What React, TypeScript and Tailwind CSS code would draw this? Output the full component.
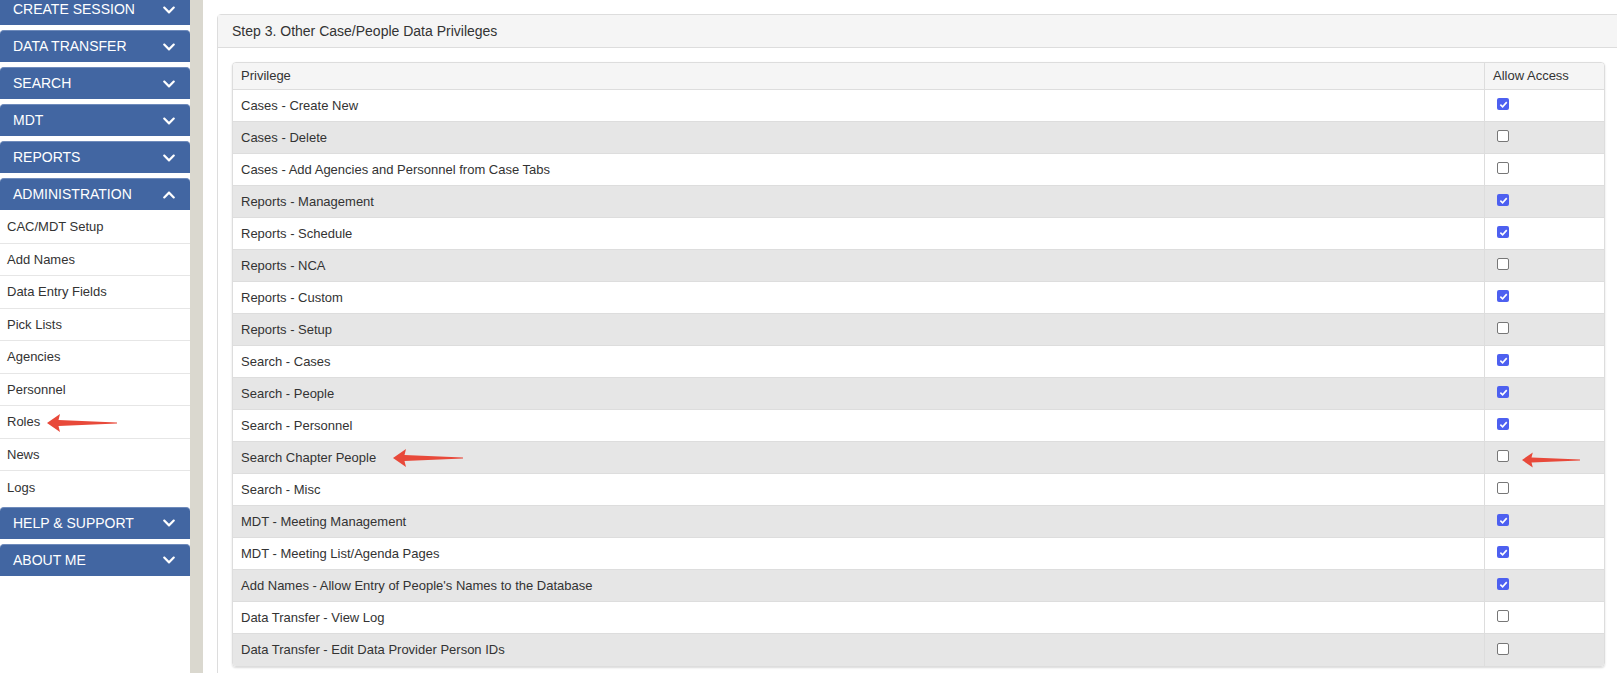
import React from 'react';
import { FaChevronDown, FaChevronUp } from 'react-icons/fa';

const menus = ['CREATE SESSION', 'DATA TRANSFER', 'SEARCH', 'MDT', 'REPORTS'];
const adminLinks = [
  'CAC/MDT Setup',
  'Add Names',
  'Data Entry Fields',
  'Pick Lists',
  'Agencies',
  'Personnel',
  'Roles',
  'News',
  'Logs',
];

const privileges: [string, boolean][] = [
  ['Cases - Create New', true],
  ['Cases - Delete', false],
  ['Cases - Add Agencies and Personnel from Case Tabs', false],
  ['Reports - Management', true],
  ['Reports - Schedule', true],
  ['Reports - NCA', false],
  ['Reports - Custom', true],
  ['Reports - Setup', false],
  ['Search - Cases', true],
  ['Search - People', true],
  ['Search - Personnel', true],
  ['Search Chapter People', false],
  ['Search - Misc', false],
  ['MDT - Meeting Management', true],
  ['MDT - Meeting List/Agenda Pages', true],
  ["Add Names - Allow Entry of People's Names to the Database", true],
  ['Data Transfer - View Log', false],
  ['Data Transfer - Edit Data Provider Person IDs', false],
];

function MenuBar({ label, open = false }: { label: string; open?: boolean }) {
  return (
    <div className="flex items-center justify-between h-[32px] mb-[5px] pl-[13px] pr-[14px] bg-[#4266a2] border-t border-[#6f8bbb] rounded-t-[4px] text-white text-[14px]">
      <span>{ label }</span>
      { open ? <FaChevronUp size={ 14 } /> : <FaChevronDown size={ 14 } /> }
    </div>
  );
}

function RedArrow({ className }: { className: string }) {
  return (
    <svg className={ `absolute pointer-events-none ${className}` } width="70" height="20" viewBox="0 0 70 20">
      <path d="M0 10 L13 1 L11.5 7 L70 9.4 L70 10.6 L11.5 13 L13 19 Z" fill="#e8493a" />
    </svg>
  );
}

function CheckBox({ checked }: { checked: boolean }) {
  return checked ? (
    <span className="flex items-center justify-center w-[12px] h-[12px] rounded-[2px] bg-[#4d60f0]">
      <svg width="9" height="9" viewBox="0 0 10 10">
        <path d="M1.5 5.2 L4 7.6 L8.6 2.4" stroke="white" strokeWidth="1.8" fill="none" />
      </svg>
    </span>
  ) : (
    <span className="block w-[12px] h-[12px] rounded-[2px] border border-[#777] bg-white" />
  );
}

export default function App() {
  return (
    <div className="relative flex h-[673px] overflow-hidden bg-white text-[#333] font-['Liberation_Sans',Arial,sans-serif]">
      <aside className="w-[190px] shrink-0 mt-[-7px]">
        { menus.map((m) => <MenuBar key={ m } label={ m } />) }
        <MenuBar label="ADMINISTRATION" open />
        <div className="mt-[-4px] mb-[3px]">
          { adminLinks.map((l, i) => (
            <div
              key={ l }
              className={ `h-[32.5px] flex items-center pl-[7px] text-[13px] ${i < adminLinks.length - 1 ? 'border-b border-[#e6e6e6]' : ''}` }
            >
              { l }
            </div>
          )) }
        </div>
        <MenuBar label="HELP & SUPPORT" />
        <MenuBar label="ABOUT ME" />
      </aside>
      <div className="w-[13px] shrink-0 bg-[#dad8cf]" />
      <main className="flex-1 pl-[14px] pt-[14px] min-w-0">
        <section className="mr-[-3px] border border-[#ddd] rounded-tl-[4px] h-[700px]">
          <div className="h-[33px] flex items-center px-[14px] bg-[#f5f5f5] border-b border-[#ddd] text-[14px]">
            Step 3. Other Case/People Data Privileges
          </div>
          <div className="p-[14px]">
            <div className="border border-[#ddd] rounded-[4px] overflow-hidden shadow-[0_1px_2px_rgba(0,0,0,0.15)]">
              <div className="flex h-[27px] bg-[#f5f5f5] border-b border-[#ddd] text-[13px]">
                <div className="flex-1 flex items-center px-[8px]">Privilege</div>
                <div className="w-[120px] flex items-center px-[8px] border-l border-[#ddd]">Allow Access</div>
              </div>
              { privileges.map(([name, ok], i) => (
                <div
                  key={ name }
                  className={ `flex h-[32px] text-[13px] ${i % 2 ? 'bg-[#e6e6e6]' : 'bg-white'} ${i < privileges.length - 1 ? 'border-b border-[#ddd]' : ''}` }
                >
                  <div className="flex-1 flex items-center px-[8px]">{ name }</div>
                  <div className="w-[120px] flex items-center pl-[12px] pb-[3px] border-l border-[#ddd]">
                    <CheckBox checked={ ok } />
                  </div>
                </div>
              )) }
            </div>
          </div>
        </section>
      </main>
      <RedArrow className="left-[47px] top-[413px]" />
      <RedArrow className="left-[393px] top-[448px]" />
      <RedArrow className="left-[1522px] top-[450px] w-[58px]" />
    </div>
  );
}
